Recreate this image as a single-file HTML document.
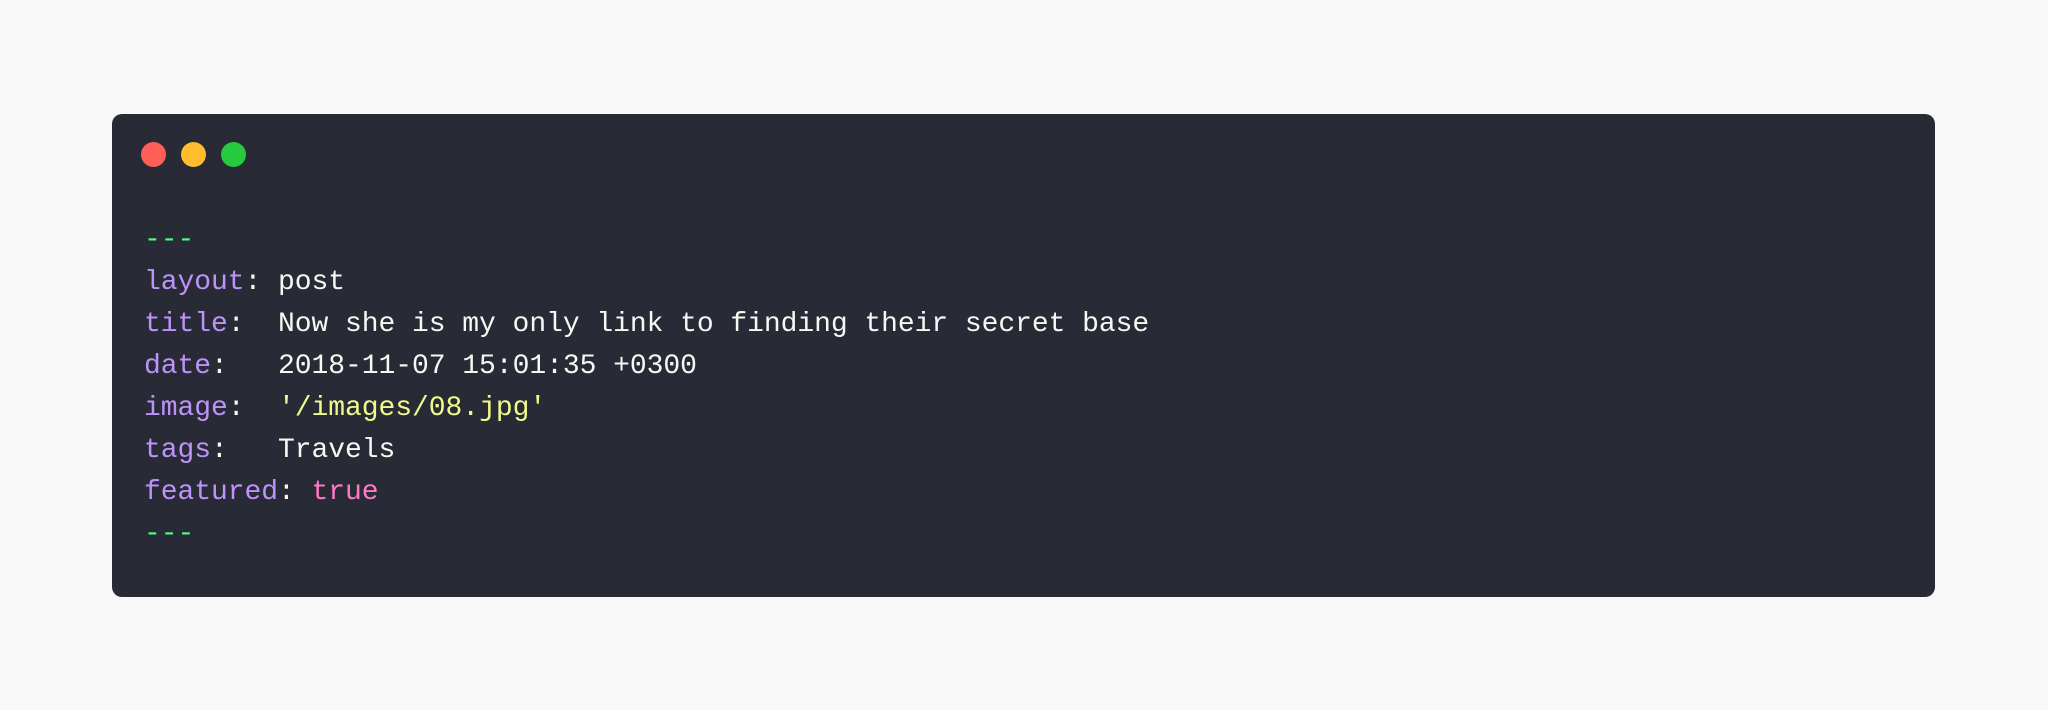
<!DOCTYPE html>
<html><head><meta charset="utf-8"><style>
html,body{margin:0;padding:0;width:2048px;height:710px;background:#f8f8f8;overflow:hidden}
.card{position:absolute;left:112px;top:114px;width:1823px;height:483px;background:#282a36;border-radius:10px}
.dot{position:absolute;top:142px;width:25px;height:25px;border-radius:50%}
pre{position:absolute;left:144px;top:220px;margin:0;font-family:"Liberation Mono",monospace;font-size:28px;line-height:42px;color:#f8f8f2;letter-spacing:-0.05px}
.k{color:#bd93f9}.g{color:#50fa7b}.y{color:#f1fa8c}.p{color:#ff79c6}
</style></head><body>
<div class="card"></div>
<div class="dot" style="left:141px;background:#ff5f56"></div>
<div class="dot" style="left:181px;background:#ffbd2e"></div>
<div class="dot" style="left:221px;background:#27c93f"></div>
<pre><span class="g">---</span>
<span class="k">layout</span>: post
<span class="k">title</span>:  Now she is my only link to finding their secret base
<span class="k">date</span>:   2018-11-07 15:01:35 +0300
<span class="k">image</span>:  <span class="y">'/images/08.jpg'</span>
<span class="k">tags</span>:   Travels
<span class="k">featured</span>: <span class="p">true</span>
<span class="g">---</span></pre>
</body></html>
